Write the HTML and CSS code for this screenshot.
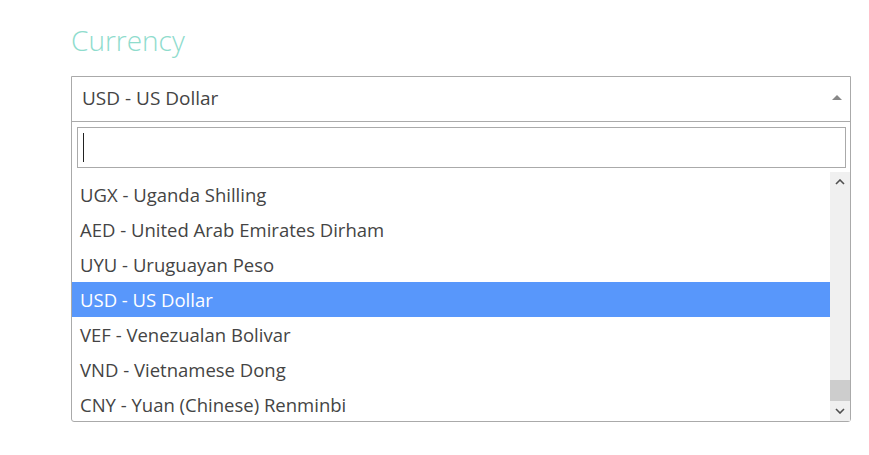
FILE: index.html
```html
<!DOCTYPE html>
<html>
<head>
<meta charset="utf-8">
<link rel="stylesheet" href="styles.css">
</head>
<body>
<div class="page">
  <h1 class="title">Currency</h1>
  <div class="select">
    <div class="selection">
      <span class="selected-text">USD - US Dollar</span>
      <span class="arrow"></span>
    </div>
    <div class="dropdown">
      <div class="search">
        <div class="search-input"><span class="caret"></span></div>
      </div>
      <div class="results">
        <ul class="options">
          <li class="option">UGX - Uganda Shilling</li>
          <li class="option">AED - United Arab Emirates Dirham</li>
          <li class="option">UYU - Uruguayan Peso</li>
          <li class="option highlighted">USD - US Dollar</li>
          <li class="option">VEF - Venezualan Bolivar</li>
          <li class="option">VND - Vietnamese Dong</li>
          <li class="option">CNY - Yuan (Chinese) Renminbi</li>
        </ul>
        <div class="scrollbar">
          <div class="sb-btn">
            <svg width="10" height="6" viewBox="0 0 10 6"><path d="M1 5 L5 1 L9 5" fill="none" stroke="#505050" stroke-width="1.6"/></svg>
          </div>
          <div class="sb-track">
            <div class="sb-thumb"></div>
          </div>
          <div class="sb-btn">
            <svg width="10" height="6" viewBox="0 0 10 6"><path d="M1 1 L5 5 L9 1" fill="none" stroke="#505050" stroke-width="1.6"/></svg>
          </div>
        </div>
      </div>
    </div>
  </div>
</div>
</body>
</html>
```

FILE: styles.css
```css
html, body {
  margin: 0;
  padding: 0;
  background: #ffffff;
}

.page {
  padding: 22px 0 0 71px;
  font-family: "Open Sans", "Noto Sans", sans-serif;
}

.title {
  margin: 0 0 17px 0;
  font-size: 28px;
  font-weight: 300;
  line-height: 37px;
  color: #8fdccd;
  letter-spacing: 0;
}

.select {
  width: 780px;
  box-sizing: border-box;
  border: 1px solid #aaaaaa;
  border-radius: 0 0 3px 3px;
  background: #fff;
}

.selection {
  height: 44px;
  border-bottom: 1px solid #aaaaaa;
  display: flex;
  align-items: center;
  justify-content: space-between;
  padding: 0 8px 0 10px;
  color: #444444;
  font-size: 19px;
}

.selected-text {
  padding-bottom: 3px;
}

.arrow {
  width: 0;
  height: 0;
  border-left: 5px solid transparent;
  border-right: 5px solid transparent;
  border-bottom: 5px solid #888888;
  margin-bottom: 4px;
}

.dropdown {
  display: flex;
  flex-direction: column;
}

.search {
  padding: 5px 4px 4px 5px;
}

.search-input {
  height: 39px;
  border: 1px solid #aaaaaa;
  display: flex;
  align-items: center;
  padding-left: 5px;
}

.caret {
  width: 1px;
  height: 29px;
  background: #222;
}

.results {
  height: 249px;
  display: flex;
  overflow: hidden;
}

.options {
  list-style: none;
  margin: 5px 0 0 0;
  padding: 0;
  flex: 1;
  overflow: hidden;
}

.option {
  height: 35px;
  line-height: 36px;
  padding: 0 8px;
  font-size: 18.5px;
  color: #444444;
  white-space: nowrap;
}

.option.highlighted {
  background: #5897fb;
  color: #ffffff;
}

.scrollbar {
  width: 20px;
  background: #f0f0f0;
  display: flex;
  flex-direction: column;
}

.sb-btn {
  height: 20px;
  display: flex;
  align-items: center;
  justify-content: center;
}

.sb-track {
  flex: 1;
  display: flex;
  flex-direction: column;
  justify-content: flex-end;
}

.sb-thumb {
  height: 21px;
  background: #cdcdcd;
}
```
